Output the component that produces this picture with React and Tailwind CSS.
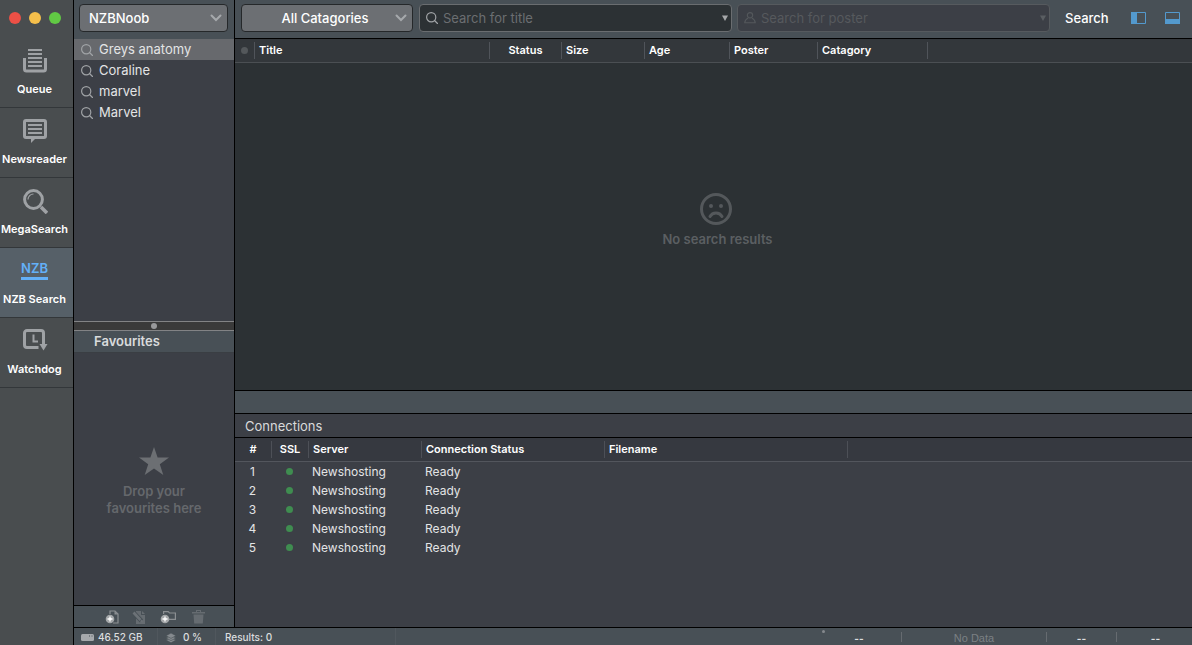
import React from "react";

const NAV_ITEMS = [
  { label: "Queue", icon: QueueIcon },
  { label: "Newsreader", icon: NewsreaderIcon },
  { label: "MegaSearch", icon: MegaSearchIcon },
  { label: "NZB Search", icon: null, active: true },
  { label: "Watchdog", icon: WatchdogIcon },
];

const HISTORY = ["Greys anatomy", "Coraline", "marvel", "Marvel"];

const CONNECTIONS = [1, 2, 3, 4, 5].map((id) => ({
  id,
  server: "Newshosting",
  status: "Ready",
}));

function QueueIcon() {
  return (
    <svg className="shrink-0" width="24" height="24" viewBox="0 0 24 24" fill="none" stroke="#9fa2a5" strokeWidth="2">
      <path d="M5 1h14M5 5h14M5 9h14M5 13h14M5 17h14" />
      <path d="M1.5 9v11a2 2 0 0 0 2 2h17a2 2 0 0 0 2-2V9" strokeWidth="3" />
    </svg>
  );
}

function NewsreaderIcon() {
  return (
    <svg className="shrink-0" width="24" height="24" viewBox="0 0 24 24" fill="none" stroke="#9fa2a5" strokeWidth="2">
      <rect x="1.5" y="1.5" width="21" height="17" rx="1.5" strokeWidth="3" />
      <path d="M5 6h14M5 10h14M5 14h14" />
      <path d="M8 19h5l-5 5z" fill="#9fa2a5" stroke="none" />
    </svg>
  );
}

function MegaSearchIcon() {
  return (
    <svg className="shrink-0" width="25" height="25" viewBox="0 0 25 25" fill="none" stroke="#9fa2a5">
      <circle cx="10.5" cy="10.5" r="8.9" strokeWidth="3" />
      <path d="M5 10.500a5.500 5.500 0 0 1 5.500-5.500" strokeWidth="1.200" />
      <path d="M18 18l6 6" strokeWidth="3.600" />
    </svg>
  );
}

function WatchdogIcon() {
  return (
    <svg className="shrink-0" width="25" height="22" viewBox="0 0 25 22" fill="none" stroke="#9fa2a5">
      <path d="M20.500 16V4a2.500 2.500 0 0 0-2.500-2.500H4A2.500 2.500 0 0 0 1.500 4v12A2.500 2.500 0 0 0 4 18.500h11.500" strokeWidth="3" />
      <path d="M10.500 5.500v7h4.500" strokeWidth="2" />
      <path d="M16.500 15h8l-4 6.500z" fill="#9fa2a5" stroke="none" />
    </svg>
  );
}

function MagnifierIcon() {
  return (
    <svg className="shrink-0" width="12" height="12" viewBox="0 0 12 12" fill="none" stroke="#a0a3a6" strokeWidth="1.200">
      <circle cx="5.200" cy="5.200" r="4.600" />
      <path d="M8.500 8.500l3 3" strokeLinecap="round" />
    </svg>
  );
}

function PersonIcon() {
  return (
    <svg className="shrink-0" width="12" height="12" viewBox="0 0 13 13" fill="none" stroke="#54585c" strokeWidth="1.200">
      <circle cx="6.500" cy="3.600" r="2.900" />
      <path d="M4.500 6.500C2.500 7.500 1 9 .800 11.600h11.400C12 9 10.500 7.500 8.500 6.500" />
    </svg>
  );
}

function Chevron() {
  return (
    <svg className="pointer-events-none absolute top-1/2 right-1.5 -translate-y-1/2" width="12" height="8" viewBox="0 0 12 8" fill="none" stroke="#a6a9ac" strokeWidth="2">
      <path d="M1.500 1.500L6 6l4.500-4.500" strokeLinecap="round" />
    </svg>
  );
}

function SelectBox({ label, value, className, selectClassName }) {
  return (
    <div className={`relative ${className}`}>
      <select
        aria-label={label}
        className={`h-7 w-full appearance-none rounded border border-[#25282a] bg-[#6c6f73] pt-0.5 text-[13px] font-medium text-white outline-none ${selectClassName}`}
      >
        <option>{value}</option>
      </select>
      <Chevron />
    </div>
  );
}

function SearchField({ label, icon, dim }) {
  return (
    <div
      className={`flex h-7 min-w-0 flex-1 items-center rounded border pr-[3px] pl-1.5 ${
        dim ? "border-[#565a5e] bg-[#3c3f46]" : "border-[#6a6d70] bg-[#2c3134]"
      }`}
    >
      {icon}
      <input
        type="text"
        aria-label={label}
        placeholder={label}
        disabled={dim}
        className={`min-w-0 flex-1 bg-transparent pt-0.5 pl-[5px] text-[13px] text-white outline-none ${
          dim ? "placeholder:text-[#56595d]" : "placeholder:text-[#6b6e71]"
        }`}
      />
      <button type="button" aria-label={`${label} options`} disabled={dim}>
        <svg width="6" height="6" viewBox="0 0 6 6" fill={dim ? "#5a5e62" : "#a6a8aa"}>
          <path d="M0 .500h6L3 6z" />
        </svg>
      </button>
    </div>
  );
}

function HeaderCell({ children, center, last, line }) {
  return (
    <th scope="col" className="p-0 font-semibold">
      <div
        className={`flex h-[17px] items-center overflow-hidden whitespace-nowrap ${
          center ? "justify-center" : "pl-1"
        } ${last ? "" : "border-r"} ${line}`}
      >
        {children}
      </div>
    </th>
  );
}

function NavSidebar() {
  return (
    <nav className="flex w-[74px] shrink-0 flex-col border-r border-black bg-[#494d4f]">
      <div className="flex h-[38px] shrink-0 items-center gap-2 pb-0.5 pl-[9px]">
        <button type="button" aria-label="Close" className="size-3 rounded-full bg-[#ec5046]" />
        <button type="button" aria-label="Minimise" className="size-3 rounded-full bg-[#f5bf4b]" />
        <button type="button" aria-label="Zoom" className="size-3 rounded-full bg-[#61c944]" />
      </div>
      {NAV_ITEMS.map(({ label, icon: Icon, active }) => (
        <button
          key={label}
          type="button"
          className={`flex h-[70px] flex-col items-center border-b border-[#33373a] pt-[11px] pr-1 ${
            active ? "bg-[#566068]" : ""
          }`}
        >
          {Icon ? (
            <span className="flex h-[26px] w-6 items-start">
              <Icon />
            </span>
          ) : (
            <span className="flex h-[26px] items-start">
              <span className="border-b-[3px] border-[#63b0f8] text-[13px] leading-[18px] font-semibold text-[#63b0f8]">
                NZB
              </span>
            </span>
          )}
          <span className="mt-1.5 text-[11px] leading-4 font-semibold whitespace-nowrap text-white">{label}</span>
        </button>
      ))}
    </nav>
  );
}

function FavouritesToolbar() {
  return (
    <div className="flex h-[22px] shrink-0 items-center border-t border-black bg-[#485056] pl-[31px]">
      <button type="button" aria-label="New search" className="w-[27px]">
        <svg width="15" height="14" viewBox="0 0 15 14" fill="none">
          <path d="M5 4V1h5l3 3v9H8" stroke="#8b8f92" strokeWidth="1.200" />
          <path d="M9.500 1v3.500H13z" fill="#8b8f92" />
          <circle cx="5" cy="9" r="4.300" fill="#a4a7a9" />
          <path d="M5 6.500v5M2.500 9h5" stroke="#fff" strokeWidth="1.300" />
        </svg>
      </button>
      <button type="button" aria-label="Edit search" className="w-7">
        <svg width="15" height="14" viewBox="0 0 15 14" fill="none">
          <path d="M4 1h5v4h4v9H4z" fill="#666c71" />
          <path d="M10 1l3 3h-3z" fill="#666c71" />
          <path d="M1.500 2.500l8 8.500" stroke="#485056" strokeWidth="4.500" />
          <path d="M1.500 2.500l7 7.500" stroke="#6c7277" strokeWidth="2.600" />
          <path d="M8 11.500l1.600-2 1.400 3z" fill="#6c7277" />
        </svg>
      </button>
      <button type="button" aria-label="New folder" className="w-8">
        <svg width="17" height="14" viewBox="0 0 17 14" fill="none">
          <path d="M3.600 4V1.600h4.600L9.500 3h5.900v6.400H9" stroke="#8b8f92" strokeWidth="1.200" />
          <circle cx="5" cy="9" r="4.300" fill="#a4a7a9" />
          <path d="M5 6.500v5M2.500 9h5" stroke="#fff" strokeWidth="1.300" />
        </svg>
      </button>
      <button type="button" aria-label="Delete">
        <svg width="13" height="14" viewBox="0 0 13 14" fill="#666c71">
          <path d="M0 2h4V0h5v2h4v1.500H0zM5 1v1h3V1zM1.500 4.500h10l-.7 9H2.200z" />
        </svg>
      </button>
    </div>
  );
}

function SearchSidebar() {
  return (
    <aside className="flex w-[161px] shrink-0 flex-col border-r border-black bg-[#3c3f46]">
      <div className="flex h-[39px] shrink-0 items-start bg-[#485056] pt-1 pr-1.5 pl-[5px]">
        <SelectBox label="Indexer" value="NZBNoob" className="flex-1" selectClassName="pl-[9px] pr-5" />
      </div>
      <ul className="min-h-0 flex-1 overflow-hidden">
        {HISTORY.map((term, i) => (
          <li key={term}>
            <button
              type="button"
              className={`flex h-[21px] w-full items-center gap-1.5 pt-px pl-[7px] text-[13px] text-[#e3e4e5] ${
                i === 0 ? "bg-[#67696d]" : ""
              }`}
            >
              <MagnifierIcon />
              {term}
            </button>
          </li>
        ))}
      </ul>
      <div className="flex h-2.5 shrink-0 items-center justify-center border-y border-[#828385] bg-[#3a3a3a]">
        <span className="size-1.5 rounded-full bg-[#98999b]" />
      </div>
      <h2 className="h-[22px] shrink-0 border-b border-[#3a3e43] bg-[#485056] pl-5 text-[13px] leading-[21px] font-semibold text-[#d9dbdc]">
        Favourites
      </h2>
      <div className="flex h-[252px] shrink-0 flex-col items-center justify-center pt-1.5 text-[13px] leading-[17px] font-semibold text-[#65686c]">
        <svg width="30" height="28" viewBox="0 0 30 28" fill="#6c6f73">
          <path d="M15 0l3.600 10.500H30l-9.200 6.700L24.300 28 15 21.400 5.700 28l3.500-10.800L0 10.500h11.400z" />
        </svg>
        <p className="mt-2 text-center">
          Drop your
          <br />
          favourites here
        </p>
      </div>
      <FavouritesToolbar />
    </aside>
  );
}

function Toolbar() {
  return (
    <header className="flex h-[39px] shrink-0 items-start border-b border-black bg-[#485056] px-1.5 pt-1">
      <SelectBox
        label="Category"
        value="All Catagories"
        className="w-[172px] shrink-0"
        selectClassName="pr-1 text-center"
      />
      <div className="mr-[15px] ml-1.5 flex min-w-0 flex-1 gap-[5px]">
        <SearchField label="Search for title" icon={<MagnifierIcon />} />
        <SearchField label="Search for poster" icon={<PersonIcon />} dim />
      </div>
      <div className="flex h-7 w-[121px] shrink-0 items-center">
        <button type="button" className="pt-0.5 text-[13px] font-medium text-white">
          Search
        </button>
        <button type="button" aria-label="Toggle sidebar" className="ml-auto">
          <svg width="15" height="12" viewBox="0 0 15 12" fill="none">
            <path d="M.5.5h14v11H.5z" stroke="#5399cd" />
            <path d="M0 0h6v12H0z" fill="#5399cd" />
          </svg>
        </button>
        <button type="button" aria-label="Toggle bottom panel" className="mr-1.5 ml-[19px]">
          <svg width="15" height="12" viewBox="0 0 15 12" fill="none">
            <path d="M.5.5h14v11H.5z" stroke="#5399cd" />
            <path d="M0 7h15v5H0z" fill="#5399cd" />
          </svg>
        </button>
      </div>
    </header>
  );
}

function Results() {
  const line = "border-[#50545a]";
  return (
    <section className="flex min-h-0 flex-1 flex-col bg-[#2c3134]">
      <table className="w-full shrink-0 table-fixed border-collapse text-left text-[11px] text-white">
        <colgroup>
          <col className="w-5" />
          <col className="w-[235px]" />
          <col className="w-[72px]" />
          <col className="w-[83px]" />
          <col className="w-[85px]" />
          <col className="w-[88px]" />
          <col className="w-[110px]" />
          <col />
        </colgroup>
        <thead>
          <tr className="h-[23px] border-b border-[#4b4f53] bg-[#33373b]">
            <HeaderCell center line={line}>
              <span className="size-[7px] rounded-full bg-[#54585b]" />
            </HeaderCell>
            <HeaderCell line={line}>Title</HeaderCell>
            <HeaderCell line={line} center>Status</HeaderCell>
            <HeaderCell line={line}>Size</HeaderCell>
            <HeaderCell line={line}>Age</HeaderCell>
            <HeaderCell line={line}>Poster</HeaderCell>
            <HeaderCell line={line}>Catagory</HeaderCell>
            <HeaderCell line={line} last />
          </tr>
        </thead>
      </table>
      <div className="flex flex-1 flex-col items-center justify-center gap-1.5 pb-3 pl-2 text-[#5b5f62]">
        <svg className="mr-1" width="32" height="32" viewBox="0 0 32 32" fill="none" stroke="#54585b" strokeWidth="3">
          <circle cx="16" cy="16" r="14.500" />
          <path d="M10 23.500c2.500-4.600 9.500-4.600 12 0" strokeLinecap="round" />
          <circle cx="11" cy="13" r="2" fill="#54585b" stroke="none" />
          <circle cx="21" cy="13" r="2" fill="#54585b" stroke="none" />
        </svg>
        <p className="text-[13px] leading-4 font-semibold">No search results</p>
      </div>
    </section>
  );
}

function Connections() {
  const line = "border-[#4d5057]";
  return (
    <section className="h-[213px] shrink-0 bg-[#3c3f46]">
      <h2 className="h-6 border-b border-black pl-2.5 text-[13px] leading-6 text-[#d9dadb]">Connections</h2>
      <table className="w-full table-fixed border-collapse text-left text-[12px] text-[#e3e4e5]">
        <colgroup>
          <col className="w-[37px]" />
          <col className="w-[37px]" />
          <col className="w-[113px]" />
          <col className="w-[183px]" />
          <col className="w-[243px]" />
          <col />
        </colgroup>
        <thead className="text-[11px] text-white">
          <tr className="h-[23px] border-b border-[#53565d] bg-[#363940]">
            <HeaderCell line={line} center>#</HeaderCell>
            <HeaderCell line={line} center>SSL</HeaderCell>
            <HeaderCell line={line}>Server</HeaderCell>
            <HeaderCell line={line}>Connection Status</HeaderCell>
            <HeaderCell line={line}>Filename</HeaderCell>
            <HeaderCell line={line} last />
          </tr>
        </thead>
        <tbody>
          {CONNECTIONS.map((c) => (
            <tr key={c.id} className="h-[19px] leading-[19px]">
              <td className="py-0 pr-0.5 pl-0 text-center">{c.id}</td>
              <td className="py-0 pr-0.5 pl-0">
                <span role="img" aria-label="Secure" className="mx-auto block size-[7px] rounded-full bg-[#3f8d50]" />
              </td>
              <td className="py-0 pr-0 pl-[3px]">{c.server}</td>
              <td className="py-0 pr-0 pl-[3px]">{c.status}</td>
              <td />
              <td />
            </tr>
          ))}
        </tbody>
      </table>
    </section>
  );
}

function StatusBar() {
  return (
    <footer className="flex h-[18px] shrink-0 items-center border-t border-black bg-[#485056] text-[10px] font-medium text-[#dcdedf]">
      <div className="flex h-full w-[84px] items-center gap-1 border-r border-[#50575d] pt-0.5 pl-[7px] whitespace-nowrap">
        <svg width="13" height="7" viewBox="0 0 13 7">
          <rect width="13" height="7" rx="1.500" fill="#a6a9ac" />
          <path d="M8 2h1M10.500 2h1" stroke="#485056" />
        </svg>
        46.52 GB
      </div>
      <div className="flex h-full w-[58px] items-center gap-[7px] border-r border-[#50575d] pt-0.5 pl-2">
        <svg width="10" height="10" viewBox="0 0 10 10" fill="#858a8e" stroke="#485056" strokeWidth=".600">
          <path d="M5 4.500l5 2.500-5 2.800L0 7z" />
          <path d="M5 2.500L10 5 5 7.600 0 5z" />
          <path d="M5 0l5 2.700L5 5.400 0 2.700z" />
        </svg>
        0 %
      </div>
      <div className="flex h-full w-[180px] items-center border-r border-[#50575d] pt-0.5 pl-[9px]">Results: 0</div>
      <div className="ml-auto flex h-full items-center text-center">
        <div className="flex h-full w-[85px]">
          <span className="mt-0.5 ml-1.5 size-[3px] rounded-full bg-[#85898d]" />
          <span className="flex-1 pt-0.5 pr-2 font-bold leading-[17px]">--</span>
        </div>
        <div className="h-2.5 w-[146px] border-x border-[#666b70] font-['Liberation_Sans',sans-serif] text-[11px] leading-3 font-normal text-[#7b8084]">
          No Data
        </div>
        <div className="h-2.5 w-[69px] leading-3 font-bold">--</div>
        <div className="h-2.5 w-[76px] border-l border-[#666b70] pl-0.5 leading-3 font-bold">--</div>
      </div>
    </footer>
  );
}

export default function App() {
  return (
    <div className="flex h-screen overflow-hidden font-['Inter',sans-serif] antialiased">
      <NavSidebar />
      <div className="flex min-w-0 flex-1 flex-col">
        <div className="flex min-h-0 flex-1">
          <SearchSidebar />
          <main className="flex min-w-0 flex-1 flex-col">
            <Toolbar />
            <Results />
            <div className="h-6 shrink-0 border-y border-black bg-[#485056]" />
            <Connections />
          </main>
        </div>
        <StatusBar />
      </div>
    </div>
  );
}
